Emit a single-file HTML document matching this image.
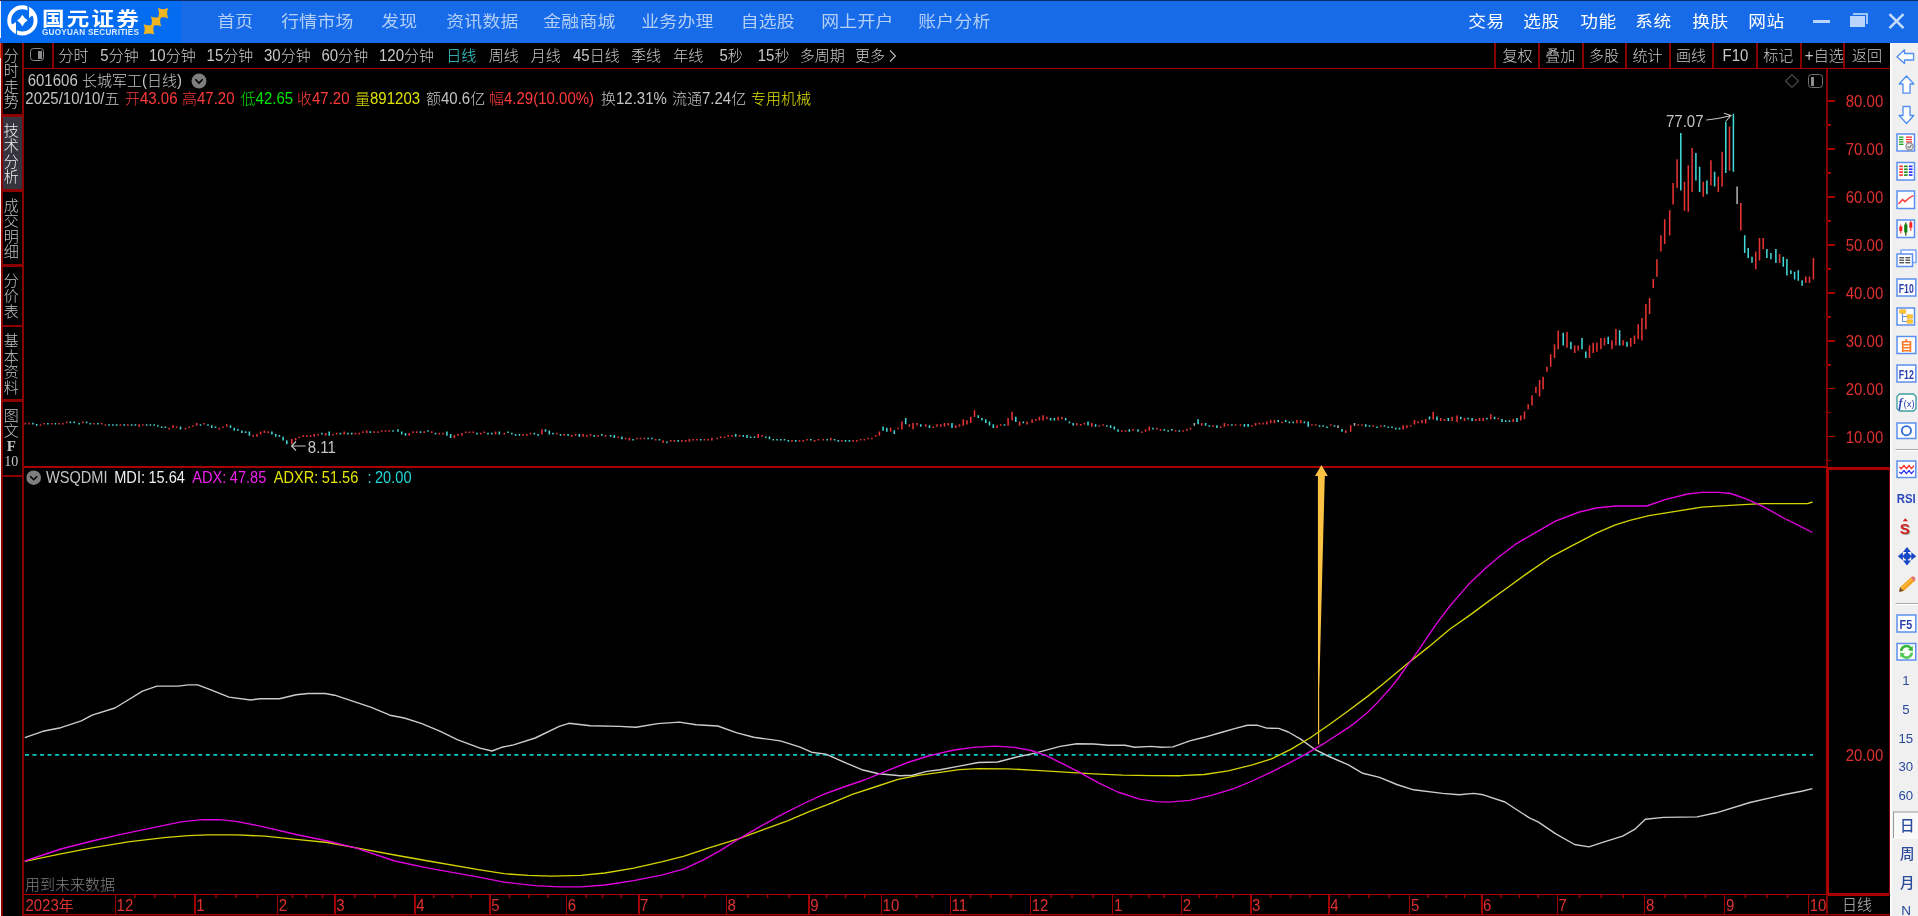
<!DOCTYPE html>
<html lang="zh-CN">
<head>
<meta charset="utf-8">
<title>国元证券 - 长城军工(日线)</title>
<style>
html,body{margin:0;padding:0;background:#000;}
body{width:1918px;height:916px;position:relative;overflow:hidden;font-family:"Liberation Sans","Noto Sans CJK SC",sans-serif;color:#c0c0c0;}
.abs{position:absolute;}
#wrap{position:absolute;left:0;top:0;width:1918px;height:916px;will-change:transform;transform:translateZ(0);filter:blur(0.35px);}
.t{position:absolute;white-space:nowrap;line-height:1;}
#title{left:0;top:0;width:1918px;height:43px;background:#176be8;}
#title .logo-bg{left:1px;top:0;width:180px;height:43px;background:#036cf0;}
#title .nav{font-size:17px;color:#b4cff6;top:12.8px;font-weight:400;letter-spacing:0.2px;transform:scale(1.05,0.93);transform-origin:50% 55%;}
#title .nav2{font-size:17px;color:#fff;top:12.6px;font-weight:400;letter-spacing:0.45px;transform:scale(1.04,0.93);transform-origin:50% 55%;}
.vl{position:absolute;width:2px;background:#880000;}
.hl{position:absolute;height:1.8px;background:#aa0000;}
.tb{font-size:15px;color:#c8c8c8;top:48px;font-weight:300;}
.d{display:inline-block;transform:scaleY(1.085);transform-origin:0 84.6%;}
.ax{font-size:15px;color:#e03030;font-weight:400;}
</style>
</head>
<body>
<div id="wrap">
<div id="title" class="abs">
  <div class="abs logo-bg"></div>
  <div class="abs" style="left:0;top:0;width:1918px;height:1px;background:#0a2a6a;"></div>
  <div class="abs" style="left:0;top:1px;width:1px;height:37px;background:#e8eef8;"></div>
  <svg class="abs" style="left:0;top:0" width="182" height="43" viewBox="0 0 182 43">
    <circle cx="22.4" cy="20.4" r="13.15" fill="none" stroke="#fff" stroke-width="3.9"/>
    <path d="M29.1 7.5 L29.1 18.35 L31.8 15.8 L34.5 17 L33 10 Z" fill="#fff"/>
    <path d="M16 22 L16 33.6 L12 30.5 L10.2 24.5 L13 24.1 Z" fill="#fff"/>
    <rect x="27.5" y="4.5" width="1.6" height="7" fill="#036cf0"/>
    <rect x="16" y="29" width="0.9" height="7" fill="#036cf0"/>
    <path d="M22.4 14.7 Q24.3 18.4 27.7 20.3 Q24.3 22.4 22.4 26.4 Q20.5 22.4 17.1 20.4 Q20.5 18.4 22.4 14.7Z" fill="#fff"/>
    <g fill="#eeb422">
      <path d="M143.5 24.3 Q149.0 26.57 154.5 24.3 Q152.08 29.450000000000003 154.5 34.6 Q149.0 32.33 143.5 34.6 Q145.92 29.450000000000003 143.5 24.3Z"/>
      <path d="M150.8 16.4 Q156.05 18.58 161.3 16.4 Q158.99 21.35 161.3 26.3 Q156.05 24.12 150.8 26.3 Q153.11 21.35 150.8 16.4Z"/>
      <path d="M157.8 8.1 Q163.05 10.37 168.3 8.1 Q165.99 13.25 168.3 18.4 Q163.05 16.13 157.8 18.4 Q160.11 13.25 157.8 8.1Z"/>
    </g>
  </svg>
  <div class="t" style="left:42px;top:6.5px;font-size:20.5px;font-weight:700;color:#fff;letter-spacing:2px;transform:scale(1.1,0.95);transform-origin:0 45%;font-family:'Noto Sans CJK SC',sans-serif;">国元证券</div>
  <div class="t" style="left:42px;top:28.5px;font-size:8.2px;font-weight:700;color:#d8e8ff;letter-spacing:0.22px;">GUOYUAN SECURITIES</div>

  <div class="t nav" style="left:218px;">首页</div>
  <div class="t nav" style="left:282.5px;">行情市场</div>
  <div class="t nav" style="left:382px;">发现</div>
  <div class="t nav" style="left:447.5px;">资讯数据</div>
  <div class="t nav" style="left:545px;">金融商城</div>
  <div class="t nav" style="left:643px;">业务办理</div>
  <div class="t nav" style="left:741.5px;">自选股</div>
  <div class="t nav" style="left:822.5px;">网上开户</div>
  <div class="t nav" style="left:920px;">账户分析</div>

  <div class="t nav2" style="left:1469px;">交易</div>
  <div class="t nav2" style="left:1524px;">选股</div>
  <div class="t nav2" style="left:1580.5px;">功能</div>
  <div class="t nav2" style="left:1636px;">系统</div>
  <div class="t nav2" style="left:1692.5px;">换肤</div>
  <div class="t nav2" style="left:1748.5px;">网站</div>

  <div class="abs" style="left:1813px;top:20px;width:17px;height:3px;background:#b9d4fb;"></div>
  <div class="abs" style="left:1853px;top:13px;width:15px;height:11px;background:#9fc4f8;"></div>
  <div class="abs" style="left:1850px;top:16px;width:15px;height:11px;background:#b9d5fb;box-shadow:0 0 0 1px #176be8;"></div>
  <svg class="abs" style="left:1886px;top:11px" width="21" height="21" viewBox="0 0 21 21"><path d="M3.5 3.2 L17.5 17.2 M17.5 3.2 L3.5 17.2" stroke="#c3dafb" stroke-width="2.6" fill="none"/></svg>
</div>
<div id="side" class="abs" style="left:0;top:43px;width:24px;height:873px;background:#000;">
<div class="abs" style="left:0;top:0;width:1px;height:15px;background:#e8451a;"></div>
<div class="abs" style="left:0;top:15px;width:1px;height:858px;background:#f4f0f0;"></div>
<div class="vl" style="left:1px;top:0;height:873px;"></div>
<div class="vl" style="left:22px;top:0;height:873px;"></div>
<div class="hl" style="left:1px;top:71.3px;width:22px;height:2.3px;background:#8c0000;"></div>
<div class="t" style="left:1.3px;width:20px;text-align:center;top:4.7px;font-size:15px;color:#c4c4c4;font-weight:300;">分</div>
<div class="t" style="left:1.3px;width:20px;text-align:center;top:20.2px;font-size:15px;color:#c4c4c4;font-weight:300;">时</div>
<div class="t" style="left:1.3px;width:20px;text-align:center;top:35.7px;font-size:15px;color:#c4c4c4;font-weight:300;">走</div>
<div class="t" style="left:1.3px;width:20px;text-align:center;top:51.2px;font-size:15px;color:#c4c4c4;font-weight:300;">势</div>
<div class="abs" style="left:3px;top:74.0px;width:19px;height:73.5px;background:#36353f;"></div>
<div class="hl" style="left:1px;top:146.3px;width:22px;height:2.3px;background:#8c0000;"></div>
<div class="t" style="left:1.3px;width:20px;text-align:center;top:79.7px;font-size:15px;color:#f0f0f0;font-weight:300;">技</div>
<div class="t" style="left:1.3px;width:20px;text-align:center;top:95.2px;font-size:15px;color:#f0f0f0;font-weight:300;">术</div>
<div class="t" style="left:1.3px;width:20px;text-align:center;top:110.7px;font-size:15px;color:#f0f0f0;font-weight:300;">分</div>
<div class="t" style="left:1.3px;width:20px;text-align:center;top:126.2px;font-size:15px;color:#f0f0f0;font-weight:300;">析</div>
<div class="hl" style="left:1px;top:221.3px;width:22px;height:2.3px;background:#8c0000;"></div>
<div class="t" style="left:1.3px;width:20px;text-align:center;top:154.7px;font-size:15px;color:#c4c4c4;font-weight:300;">成</div>
<div class="t" style="left:1.3px;width:20px;text-align:center;top:170.2px;font-size:15px;color:#c4c4c4;font-weight:300;">交</div>
<div class="t" style="left:1.3px;width:20px;text-align:center;top:185.7px;font-size:15px;color:#c4c4c4;font-weight:300;">明</div>
<div class="t" style="left:1.3px;width:20px;text-align:center;top:201.2px;font-size:15px;color:#c4c4c4;font-weight:300;">细</div>
<div class="hl" style="left:1px;top:281.8px;width:22px;height:2.3px;background:#8c0000;"></div>
<div class="t" style="left:1.3px;width:20px;text-align:center;top:229.7px;font-size:15px;color:#c4c4c4;font-weight:300;">分</div>
<div class="t" style="left:1.3px;width:20px;text-align:center;top:245.2px;font-size:15px;color:#c4c4c4;font-weight:300;">价</div>
<div class="t" style="left:1.3px;width:20px;text-align:center;top:260.7px;font-size:15px;color:#c4c4c4;font-weight:300;">表</div>
<div class="hl" style="left:1px;top:356.3px;width:22px;height:2.3px;background:#8c0000;"></div>
<div class="t" style="left:1.3px;width:20px;text-align:center;top:290.2px;font-size:15px;color:#c4c4c4;font-weight:300;">基</div>
<div class="t" style="left:1.3px;width:20px;text-align:center;top:305.7px;font-size:15px;color:#c4c4c4;font-weight:300;">本</div>
<div class="t" style="left:1.3px;width:20px;text-align:center;top:321.2px;font-size:15px;color:#c4c4c4;font-weight:300;">资</div>
<div class="t" style="left:1.3px;width:20px;text-align:center;top:336.7px;font-size:15px;color:#c4c4c4;font-weight:300;">料</div>
<div class="hl" style="left:1px;top:431.8px;width:22px;height:2.3px;background:#8c0000;"></div>
<div class="t" style="left:1.3px;width:20px;text-align:center;top:364.7px;font-size:15px;color:#c4c4c4;font-weight:300;">图</div>
<div class="t" style="left:1.3px;width:20px;text-align:center;top:380.2px;font-size:15px;color:#c4c4c4;font-weight:300;">文</div>
<div class="t" style="left:1.3px;width:20px;text-align:center;top:395.7px;font-size:15px;color:#c4c4c4;font-weight:300;font-family:'Liberation Serif',serif;font-weight:700;">F</div>
<div class="t" style="left:1.3px;width:20px;text-align:center;top:411.7px;font-size:14px;color:#c4c4c4;font-weight:300;font-family:'Liberation Serif',serif;">10</div>
</div>
<div class="abs" style="left:30px;top:48.3px;width:12px;height:10.6px;border:1.5px solid #8a8a8a;border-radius:3.5px;"></div>
<div class="abs" style="left:38.2px;top:50.8px;width:3.8px;height:8.4px;background:#8c8c8c;"></div>
<div class="vl" style="left:52px;top:43px;height:25px;"></div>
<div class="t tb" style="left:58.4px;">分时</div>
<div class="t tb" style="left:100.3px;"><span class="d">5</span>分钟</div>
<div class="t tb" style="left:149px;"><span class="d">10</span>分钟</div>
<div class="t tb" style="left:206.6px;"><span class="d">15</span>分钟</div>
<div class="t tb" style="left:264px;"><span class="d">30</span>分钟</div>
<div class="t tb" style="left:321.5px;"><span class="d">60</span>分钟</div>
<div class="t tb" style="left:379px;"><span class="d">120</span>分钟</div>
<div class="t tb" style="left:446.2px;color:#3cdada;">日线</div>
<div class="t tb" style="left:488.7px;">周线</div>
<div class="t tb" style="left:530.8px;">月线</div>
<div class="t tb" style="left:573px;"><span class="d">45</span>日线</div>
<div class="t tb" style="left:631px;">季线</div>
<div class="t tb" style="left:673.3px;">年线</div>
<div class="t tb" style="left:719.4px;"><span class="d">5</span>秒</div>
<div class="t tb" style="left:757.7px;"><span class="d">15</span>秒</div>
<div class="t tb" style="left:799.7px;">多周期</div>
<div class="t tb" style="left:854.9px;">更多</div>
<svg class="abs" style="left:888px;top:49px" width="10" height="14" viewBox="0 0 10 14"><path d="M2 1.5 L7.5 7 L2 12.5" stroke="#b8b8b8" stroke-width="1.1" fill="none"/></svg>
<div class="vl" style="left:1494.3px;top:43px;height:25px;"></div>
<div class="t tb" style="left:1495.7px;width:43.5px;text-align:center;">复权</div>
<div class="vl" style="left:1537.8px;top:43px;height:25px;"></div>
<div class="t tb" style="left:1538.2px;width:44px;text-align:center;">叠加</div>
<div class="vl" style="left:1581.8px;top:43px;height:25px;"></div>
<div class="t tb" style="left:1582.2px;width:43.5px;text-align:center;">多股</div>
<div class="vl" style="left:1625.3px;top:43px;height:25px;"></div>
<div class="t tb" style="left:1625.7px;width:43.5px;text-align:center;">统计</div>
<div class="vl" style="left:1668.8px;top:43px;height:25px;"></div>
<div class="t tb" style="left:1669.2px;width:43.5px;text-align:center;">画线</div>
<div class="vl" style="left:1712.3px;top:43px;height:25px;"></div>
<div class="t tb" style="left:1713.7px;width:43.5px;text-align:center;"><span class="d">F10</span></div>
<div class="vl" style="left:1755.8px;top:43px;height:25px;"></div>
<div class="t tb" style="left:1756.2px;width:44px;text-align:center;">标记</div>
<div class="vl" style="left:1799.8px;top:43px;height:25px;"></div>
<div class="t tb" style="left:1802.5px;width:43.5px;text-align:center;"><span class="d">+</span>自选</div>
<div class="vl" style="left:1843.3px;top:43px;height:25px;"></div>
<div class="t tb" style="left:1845.2px;width:43.5px;text-align:center;">返回</div>
<div class="hl" style="left:24px;top:67.6px;width:1866px;height:1.7px;"></div>
<div class="t" style="left:27.7px;top:73px;font-size:15px;color:#c4c4c4;font-weight:300;"><span class="d">601606</span> 长城军工<span class="d">(</span>日线<span class="d">)</span></div>
<svg class="abs" style="left:191px;top:72.5px" width="16" height="16" viewBox="0 0 16 16"><circle cx="8" cy="8" r="7.5" fill="#7e7e7e"/><path d="M4.3 6.3 L8 10 L11.7 6.3" stroke="#000" stroke-width="1.6" fill="none"/></svg>
<div class="t" style="left:25.3px;top:91px;font-size:15px;color:#c4c4c4;font-weight:300;"><span class="d">2025/10/10/</span>五</div>
<div class="t" style="left:125px;top:91px;font-size:15px;color:#ff3a3a;font-weight:300;">开<span class="d">43.06</span></div>
<div class="t" style="left:182px;top:91px;font-size:15px;color:#ff3a3a;font-weight:300;">高<span class="d">47.20</span></div>
<div class="t" style="left:240.6px;top:91px;font-size:15px;color:#00e600;font-weight:300;">低<span class="d">42.65</span></div>
<div class="t" style="left:297px;top:91px;font-size:15px;color:#ff3a3a;font-weight:300;">收<span class="d">47.20</span></div>
<div class="t" style="left:355px;top:91px;font-size:15px;color:#e0e000;font-weight:300;">量<span class="d">891203</span></div>
<div class="t" style="left:426px;top:91px;font-size:15px;color:#c4c4c4;font-weight:300;">额<span class="d">40.6</span>亿</div>
<div class="t" style="left:489px;top:91px;font-size:15px;color:#ff3a3a;font-weight:300;">幅<span class="d">4.29(10.00%)</span></div>
<div class="t" style="left:601px;top:91px;font-size:15px;color:#c4c4c4;font-weight:300;">换<span class="d">12.31%</span></div>
<div class="t" style="left:672px;top:91px;font-size:15px;color:#c4c4c4;font-weight:300;">流通<span class="d">7.24</span>亿</div>
<div class="t" style="left:751px;top:91px;font-size:15px;color:#e0e000;font-weight:300;">专用机械</div>
<svg class="abs" style="left:1784px;top:73px" width="16" height="16" viewBox="0 0 16 16"><path d="M8 1.6 L14.4 8 L8 14.4 L1.6 8 Z" stroke="#4a4a4a" stroke-width="1.2" fill="none"/></svg>
<div class="abs" style="left:1808px;top:74.2px;width:12.6px;height:11.6px;border:1.5px solid #707070;border-radius:3.5px;"></div>
<div class="abs" style="left:1810.8px;top:77px;width:3.6px;height:8.6px;background:#8c8c8c;"></div>
<div class="vl" style="left:1826.4px;top:69px;height:399px;"></div>
<div class="vl" style="left:1826.2px;top:467px;height:427px;width:2.7px;background:#b00000;"></div>
<div class="hl" style="left:24px;top:466.3px;width:1803px;height:1.4px;"></div>
<div class="hl" style="left:1827px;top:466.5px;width:62px;height:3px;"></div>
<div class="vl" style="left:1888.7px;top:467px;height:428px;"></div>
<div class="hl" style="left:1827px;top:893px;width:62px;height:2.6px;"></div>
<div class="hl" style="left:24px;top:893.8px;width:1803px;height:1.4px;"></div>
<div class="hl" style="left:24px;top:914.9px;width:1866px;height:1.1px;background:#5c0000;"></div>
<div class="hl" style="left:24px;top:913.9px;width:1866px;height:1.3px;background:#a40000;"></div>
<div class="vl" style="left:1826.4px;top:894px;height:21px;"></div>
<div class="abs" style="left:1828px;top:435.9px;width:6.5px;height:1.5px;background:#a60000;"></div>
<div class="t ax" style="left:1845.7px;top:429.8px;"><span class="d">10.00</span></div>
<div class="abs" style="left:1828px;top:387.9px;width:6.5px;height:1.5px;background:#a60000;"></div>
<div class="t ax" style="left:1845.7px;top:381.8px;"><span class="d">20.00</span></div>
<div class="abs" style="left:1828px;top:340.0px;width:6.5px;height:1.5px;background:#a60000;"></div>
<div class="t ax" style="left:1845.7px;top:333.9px;"><span class="d">30.00</span></div>
<div class="abs" style="left:1828px;top:292.1px;width:6.5px;height:1.5px;background:#a60000;"></div>
<div class="t ax" style="left:1845.7px;top:286.0px;"><span class="d">40.00</span></div>
<div class="abs" style="left:1828px;top:244.1px;width:6.5px;height:1.5px;background:#a60000;"></div>
<div class="t ax" style="left:1845.7px;top:238.0px;"><span class="d">50.00</span></div>
<div class="abs" style="left:1828px;top:196.2px;width:6.5px;height:1.5px;background:#a60000;"></div>
<div class="t ax" style="left:1845.7px;top:190.1px;"><span class="d">60.00</span></div>
<div class="abs" style="left:1828px;top:148.2px;width:6.5px;height:1.5px;background:#a60000;"></div>
<div class="t ax" style="left:1845.7px;top:142.1px;"><span class="d">70.00</span></div>
<div class="abs" style="left:1828px;top:100.3px;width:6.5px;height:1.5px;background:#a60000;"></div>
<div class="t ax" style="left:1845.7px;top:94.2px;"><span class="d">80.00</span></div>
<div class="abs" style="left:1828px;top:459.8px;width:2.8px;height:1.5px;background:#a60000;"></div>
<div class="abs" style="left:1828px;top:411.9px;width:2.8px;height:1.5px;background:#a60000;"></div>
<div class="abs" style="left:1828px;top:364.0px;width:2.8px;height:1.5px;background:#a60000;"></div>
<div class="abs" style="left:1828px;top:316.0px;width:2.8px;height:1.5px;background:#a60000;"></div>
<div class="abs" style="left:1828px;top:268.1px;width:2.8px;height:1.5px;background:#a60000;"></div>
<div class="abs" style="left:1828px;top:220.2px;width:2.8px;height:1.5px;background:#a60000;"></div>
<div class="abs" style="left:1828px;top:172.2px;width:2.8px;height:1.5px;background:#a60000;"></div>
<div class="abs" style="left:1828px;top:124.3px;width:2.8px;height:1.5px;background:#a60000;"></div>
<div class="t ax" style="left:1845.7px;top:748.4px;"><span class="d">20.00</span></div>
<svg class="abs" style="left:26px;top:470px" width="16" height="16" viewBox="0 0 16 16"><circle cx="7.7" cy="7.7" r="7.3" fill="#7e7e7e"/><path d="M4.2 6.2 L7.7 9.7 L11.2 6.2" stroke="#000" stroke-width="1.6" fill="none"/></svg>
<div class="t" style="left:45.9px;top:470.5px;font-size:14.6px;color:#c4c4c4;"><span class="d">WSQDMI</span></div>
<div class="t" style="left:114.2px;top:470.5px;font-size:14.6px;color:#f0f0f0;"><span class="d">MDI:</span></div>
<div class="t" style="left:148.4px;top:470.5px;font-size:14.6px;color:#f0f0f0;"><span class="d">15.64</span></div>
<div class="t" style="left:192.2px;top:470.5px;font-size:14.6px;color:#f020f0;"><span class="d">ADX:</span></div>
<div class="t" style="left:229.8px;top:470.5px;font-size:14.6px;color:#f020f0;"><span class="d">47.85</span></div>
<div class="t" style="left:273.7px;top:470.5px;font-size:14.6px;color:#e4e400;"><span class="d">ADXR:</span></div>
<div class="t" style="left:321.8px;top:470.5px;font-size:14.6px;color:#e4e400;"><span class="d">51.56</span></div>
<div class="t" style="left:367.6px;top:470.5px;font-size:14.6px;color:#20d8d8;"><span class="d">:</span></div>
<div class="t" style="left:375px;top:470.5px;font-size:14.6px;color:#20d8d8;"><span class="d">20.00</span></div>
<div class="t" style="left:25px;top:877px;font-size:15px;color:#808080;font-weight:300;">用到未来数据</div>
<div class="t ax" style="left:25.4px;top:897.5px;"><span class="d">2023</span>年</div>
<div class="abs" style="left:114.6px;top:895px;width:1.5px;height:19px;background:#a00000;"></div>
<div class="t ax" style="left:116.6px;top:897.5px;"><span class="d">12</span></div>
<div class="abs" style="left:194.3px;top:895px;width:1.5px;height:19px;background:#a00000;"></div>
<div class="t ax" style="left:196.3px;top:897.5px;"><span class="d">1</span></div>
<div class="abs" style="left:276.8px;top:895px;width:1.5px;height:19px;background:#a00000;"></div>
<div class="t ax" style="left:278.8px;top:897.5px;"><span class="d">2</span></div>
<div class="abs" style="left:334.3px;top:895px;width:1.5px;height:19px;background:#a00000;"></div>
<div class="t ax" style="left:336.3px;top:897.5px;"><span class="d">3</span></div>
<div class="abs" style="left:414.3px;top:895px;width:1.5px;height:19px;background:#a00000;"></div>
<div class="t ax" style="left:416.3px;top:897.5px;"><span class="d">4</span></div>
<div class="abs" style="left:489.3px;top:895px;width:1.5px;height:19px;background:#a00000;"></div>
<div class="t ax" style="left:491.3px;top:897.5px;"><span class="d">5</span></div>
<div class="abs" style="left:565.8px;top:895px;width:1.5px;height:19px;background:#a00000;"></div>
<div class="t ax" style="left:567.8px;top:897.5px;"><span class="d">6</span></div>
<div class="abs" style="left:638.1px;top:895px;width:1.5px;height:19px;background:#a00000;"></div>
<div class="t ax" style="left:640.1px;top:897.5px;"><span class="d">7</span></div>
<div class="abs" style="left:725.6px;top:895px;width:1.5px;height:19px;background:#a00000;"></div>
<div class="t ax" style="left:727.6px;top:897.5px;"><span class="d">8</span></div>
<div class="abs" style="left:808.3px;top:895px;width:1.5px;height:19px;background:#a00000;"></div>
<div class="t ax" style="left:810.3px;top:897.5px;"><span class="d">9</span></div>
<div class="abs" style="left:880.6px;top:895px;width:1.5px;height:19px;background:#a00000;"></div>
<div class="t ax" style="left:882.6px;top:897.5px;"><span class="d">10</span></div>
<div class="abs" style="left:949.6px;top:895px;width:1.5px;height:19px;background:#a00000;"></div>
<div class="t ax" style="left:951.6px;top:897.5px;"><span class="d">11</span></div>
<div class="abs" style="left:1029.7px;top:895px;width:1.5px;height:19px;background:#a00000;"></div>
<div class="t ax" style="left:1031.7px;top:897.5px;"><span class="d">12</span></div>
<div class="abs" style="left:1111.9px;top:895px;width:1.5px;height:19px;background:#a00000;"></div>
<div class="t ax" style="left:1113.9px;top:897.5px;"><span class="d">1</span></div>
<div class="abs" style="left:1180.8px;top:895px;width:1.5px;height:19px;background:#a00000;"></div>
<div class="t ax" style="left:1182.8px;top:897.5px;"><span class="d">2</span></div>
<div class="abs" style="left:1250.1px;top:895px;width:1.5px;height:19px;background:#a00000;"></div>
<div class="t ax" style="left:1252.1px;top:897.5px;"><span class="d">3</span></div>
<div class="abs" style="left:1328.3px;top:895px;width:1.5px;height:19px;background:#a00000;"></div>
<div class="t ax" style="left:1330.3px;top:897.5px;"><span class="d">4</span></div>
<div class="abs" style="left:1408.9px;top:895px;width:1.5px;height:19px;background:#a00000;"></div>
<div class="t ax" style="left:1410.9px;top:897.5px;"><span class="d">5</span></div>
<div class="abs" style="left:1481.1px;top:895px;width:1.5px;height:19px;background:#a00000;"></div>
<div class="t ax" style="left:1483.1px;top:897.5px;"><span class="d">6</span></div>
<div class="abs" style="left:1556.5px;top:895px;width:1.5px;height:19px;background:#a00000;"></div>
<div class="t ax" style="left:1558.5px;top:897.5px;"><span class="d">7</span></div>
<div class="abs" style="left:1643.9px;top:895px;width:1.5px;height:19px;background:#a00000;"></div>
<div class="t ax" style="left:1645.9px;top:897.5px;"><span class="d">8</span></div>
<div class="abs" style="left:1723.9px;top:895px;width:1.5px;height:19px;background:#a00000;"></div>
<div class="t ax" style="left:1725.9px;top:897.5px;"><span class="d">9</span></div>
<div class="abs" style="left:1807.7px;top:895px;width:1.5px;height:19px;background:#a00000;"></div>
<div class="t ax" style="left:1809.7px;top:897.5px;"><span class="d">10</span></div>
<svg class="abs" style="left:0;top:890px" width="1830" height="12" viewBox="0 890 1830 12"><path d="M135.0 895V898M155.0 895V898M175.0 895V898M216.0 895V898M236.0 895V898M257.5 895V898M292.5 895V898M306.0 895V898M322.5 895V898M355.0 895V898M375.0 895V898M395.0 895V898M433.7 895V898M452.5 895V898M471.0 895V898M509.5 895V898M528.8 895V898M548.0 895V898M586.3 895V898M602.6 895V898M621.3 895V898M661.3 895V898M683.0 895V898M705.0 895V898M747.8 895V898M767.6 895V898M789.0 895V898M826.6 895V898M845.6 895V898M864.6 895V898M916.5 895V898M932.5 895V898M970.5 895V898M990.8 895V898M1010.8 895V898M1051.3 895V898M1072.0 895V898M1093.0 895V898M1131.3 895V898M1148.8 895V898M1164.3 895V898M1199.3 895V898M1216.3 895V898M1233.0 895V898M1270.5 895V898M1290.5 895V898M1310.0 895V898M1349.3 895V898M1368.8 895V898M1389.3 895V898M1428.0 895V898M1446.3 895V898M1464.5 895V898M1500.8 895V898M1519.5 895V898M1538.3 895V898M1579.5 895V898M1601.3 895V898M1623.3 895V898M1665.0 895V898M1685.5 895V898M1705.5 895V898M1745.5 895V898M1767.0 895V898M1787.5 895V898" stroke="#a00000" stroke-width="1.4" fill="none"/></svg>
<div class="t" style="left:1842px;top:896.5px;font-size:15px;color:#c4c4c4;font-weight:300;">日线</div>
<svg class="abs" style="left:0;top:0" width="1918" height="916" viewBox="0 0 1918 916">
<path d="M25.4 422.7V424.4M29.1 422.7V424.4M40.5 424.2V425.8M44.2 422.9V424.5M51.7 422.9V424.5M59.2 422.9V424.5M62.9 422.9V424.5M66.7 421.6V423.2M82.9 421.6V423.2M94.1 422.9V424.5M101.6 422.9V424.5M105.4 424.2V425.8M120.4 424.2V425.8M127.9 424.2V425.8M139.2 424.2V426.8M142.9 424.2V425.8M169.2 427.8V429.4M173.0 425.2V428.1M176.7 426.5V428.1M185.5 427.8V429.4M189.2 426.5V428.1M193.0 425.2V426.8M196.7 422.9V425.8M204.2 422.9V424.5M219.2 427.8V429.4M223.0 426.5V428.1M226.8 424.2V426.8M253.1 435.1V436.7M256.9 434.1V436.7M260.6 431.5V434.4M264.4 430.5V433.1M268.2 431.3V432.9M291.8 439.0V444.0M295.6 438.0V440.6M299.3 436.5V438.1M303.1 435.3V436.9M306.8 435.3V436.9M310.6 435.3V436.9M314.3 434.1V436.7M318.1 434.0V435.6M325.6 432.9V435.7M332.9 434.0V435.6M336.7 432.8V434.4M344.2 431.5V434.4M355.4 432.8V434.4M359.2 432.8V434.4M362.9 431.3V432.9M366.7 430.2V433.1M374.2 431.3V432.9M378.0 431.3V432.9M381.7 430.2V431.8M385.5 430.2V431.8M389.2 430.2V431.8M409.2 432.9V435.7M413.0 431.3V432.9M416.7 431.3V432.9M424.3 431.3V432.9M431.8 431.3V432.9M439.3 432.8V434.4M443.1 432.8V434.4M454.4 435.1V438.0M458.1 434.1V435.7M461.9 432.9V435.7M465.7 431.5V433.1M469.4 431.5V433.1M473.2 431.5V433.1M480.7 432.8V434.4M484.4 431.5V433.1M495.6 431.5V434.4M504.3 432.8V434.4M523.1 434.1V435.7M526.9 434.1V435.7M530.6 432.8V434.4M541.9 429.2V434.4M556.8 432.8V434.4M564.3 434.1V435.7M571.8 435.1V436.7M575.6 434.1V435.7M583.1 434.1V436.7M586.8 435.1V436.7M590.6 434.1V435.7M598.1 435.1V436.7M605.6 435.1V436.7M618.1 436.4V438.0M625.6 437.7V439.3M629.4 437.8V440.6M636.9 437.7V439.3M640.5 437.7V439.3M644.4 437.7V439.3M655.6 439.0V440.6M663.1 440.2V443.0M670.7 440.1V441.7M674.4 440.1V441.7M681.9 440.1V441.7M685.7 440.1V441.7M689.4 439.0V441.7M693.2 439.0V440.6M696.9 439.0V440.6M704.4 439.0V440.6M708.2 439.0V440.6M711.9 437.8V440.6M717.0 437.7V439.3M720.7 436.4V438.0M724.5 436.4V438.0M728.2 435.1V436.7M732.0 435.1V436.7M739.5 435.1V436.7M758.2 434.1V438.0M762.0 435.1V436.7M792.0 440.1V441.7M799.5 440.1V441.7M803.3 440.1V441.7M807.0 439.0V440.6M814.6 440.1V441.7M818.3 439.0V440.6M823.3 439.0V440.6M830.8 437.8V440.6M841.9 440.1V441.7M853.1 440.1V441.7M856.9 440.1V441.7M860.6 439.0V440.6M864.4 439.0V440.6M868.2 437.7V439.3M871.9 437.7V439.3M875.7 435.1V436.7M879.4 431.5V435.7M890.6 427.8V431.8M898.1 427.7V429.3M901.9 421.6V429.4M909.4 424.2V426.8M913.0 422.9V429.2M917.0 422.9V425.6M925.7 424.2V426.8M933.2 426.5V428.1M937.0 424.2V426.8M940.7 424.2V426.8M944.5 422.9V426.8M948.2 422.9V425.6M955.7 425.2V428.1M959.5 424.2V426.8M963.3 419.2V425.8M967.0 420.3V424.4M970.8 416.7V422.9M974.5 410.3V416.9M997.0 425.2V428.1M1000.8 424.2V425.8M1008.1 417.9V425.8M1012.1 411.7V420.5M1019.6 421.6V425.8M1027.1 421.6V424.4M1032.1 419.2V422.9M1035.8 419.1V420.7M1039.4 416.7V420.5M1043.1 415.3V420.5M1046.9 416.7V419.2M1058.1 416.7V420.5M1061.9 416.7V419.2M1076.9 422.9V425.6M1080.7 424.1V425.7M1084.4 422.8V424.4M1091.8 422.9V426.8M1099.3 425.2V426.8M1103.1 424.2V425.8M1121.8 430.2V431.8M1125.5 430.2V431.8M1133.0 429.1V430.7M1141.8 431.4V433.0M1145.5 429.2V431.8M1149.3 426.6V430.7M1156.8 427.8V429.4M1160.5 429.1V430.7M1175.6 430.2V431.8M1183.1 430.2V431.8M1186.8 429.1V430.7M1190.6 427.8V429.4M1201.8 422.9V425.8M1213.1 425.2V426.8M1220.6 426.5V428.1M1224.4 422.9V426.8M1228.1 424.2V425.8M1235.6 424.2V425.8M1240.5 424.2V425.8M1252.0 425.2V426.8M1255.6 422.9V425.8M1259.4 422.8V424.4M1263.1 422.8V424.4M1266.9 421.6V424.4M1270.7 420.0V423.2M1274.4 420.0V423.2M1281.9 421.6V423.2M1296.9 420.0V423.2M1300.7 420.0V423.2M1311.9 424.2V425.8M1315.7 424.2V425.8M1330.7 424.2V425.8M1345.7 430.2V433.1M1350.7 425.2V431.8M1358.2 424.2V425.8M1362.0 424.2V425.8M1373.3 425.2V426.8M1380.8 425.2V426.8M1403.2 425.2V429.4M1406.9 425.2V428.1M1410.7 425.2V426.8M1414.5 420.0V424.4M1418.2 421.6V423.2M1422.0 420.0V423.2M1425.7 419.0V423.2M1433.2 411.7V419.5M1440.7 418.0V420.9M1444.5 419.1V420.9M1452.1 416.7V420.9M1457.0 415.4V421.9M1464.5 418.0V420.9M1475.8 419.1V420.9M1479.5 418.0V420.9M1483.2 418.0V420.9M1490.8 414.2V419.3M1498.3 417.8V419.4M1513.2 419.1V421.9M1520.8 415.4V420.6M1524.5 411.6V419.3M1528.2 404.3V409.3M1532.0 395.3V405.5M1535.9 386.8V392.9M1539.6 380.0V396.6M1543.1 376.8V389.2M1547.0 366.7V371.7M1550.7 354.2V366.7M1554.5 344.3V358.0M1558.2 330.5V349.3M1567.0 331.7V347.8M1574.7 345.5V352.9M1578.2 345.5V350.4M1589.5 345.5V357.9M1593.2 342.8V352.9M1596.9 342.8V351.8M1600.9 337.9V349.2M1604.5 337.9V345.5M1612.0 340.2V349.2M1615.9 329.1V345.5M1623.1 340.2V345.5M1630.7 337.9V346.8M1634.5 335.4V344.1M1638.2 324.2V339.3M1641.9 317.9V340.5M1645.9 304.1V329.3M1649.6 298.0V314.0M1653.3 279.1V287.9M1656.9 259.2V276.7M1660.9 235.3V251.6M1664.7 219.2V244.0M1669.7 210.2V235.5M1673.1 182.9V204.4M1677.1 159.2V188.0M1684.5 181.7V210.7M1688.3 165.3V211.7M1692.1 148.0V191.9M1703.3 181.8V196.7M1710.9 160.2V185.5M1718.3 176.8V191.9M1722.1 151.7V186.6M1729.5 126.4V170.7M1740.8 203.0V230.6M1755.8 251.6V269.3M1759.5 237.9V260.6M1763.2 237.9V249.3M1779.6 254.1V263.0M1805.8 276.6V282.9M1809.5 276.6V282.9M1813.4 258.0V279.4" stroke="#e63333" stroke-width="1.55" fill="none"/>
<path d="M32.9 422.7V424.4M36.7 424.1V425.8M47.9 422.9V424.5M55.4 422.9V424.5M70.4 421.6V423.2M74.2 421.6V423.2M79.1 422.9V424.5M86.6 421.6V423.2M90.4 422.9V424.5M97.9 422.9V424.5M109.1 424.2V425.8M112.9 424.2V425.8M116.6 424.2V425.8M124.2 424.2V425.8M131.7 424.2V425.8M135.4 424.2V425.8M146.7 424.2V425.8M150.4 424.2V425.8M154.2 424.2V425.8M157.9 425.2V426.8M161.7 426.5V428.1M165.4 426.5V428.1M180.5 426.6V429.4M200.5 424.2V425.8M208.0 424.2V425.8M211.7 425.2V428.1M215.5 426.5V428.1M230.5 425.2V428.1M234.3 427.8V430.7M238.0 429.1V430.7M241.9 430.5V433.1M245.6 431.3V432.9M249.4 431.5V435.7M271.9 431.5V434.4M275.7 434.1V436.7M279.4 435.1V436.7M283.1 436.7V440.6M286.8 440.2V444.2M321.9 432.8V434.4M329.2 431.5V435.7M340.4 432.8V434.4M347.9 432.8V434.4M351.7 432.8V434.4M370.4 431.3V432.9M393.0 430.2V431.8M398.0 429.2V431.8M401.7 431.5V434.4M405.5 432.9V435.7M420.5 431.3V432.9M428.0 430.2V431.8M435.5 432.8V434.4M446.9 431.5V435.7M450.6 434.1V438.0M476.9 432.8V434.4M488.0 432.8V434.4M491.8 432.8V434.4M499.3 431.5V434.4M508.1 431.5V433.1M511.8 432.8V434.4M515.6 434.1V435.7M519.4 434.1V435.7M534.4 432.8V434.4M538.1 434.1V435.7M545.5 429.2V431.8M549.3 430.5V434.4M553.0 432.8V434.4M560.5 434.1V435.7M568.1 434.1V435.7M579.3 434.1V436.7M594.3 435.1V436.7M601.8 434.1V435.7M610.6 435.1V436.7M614.3 435.1V438.0M621.9 436.5V439.3M633.1 439.0V440.6M648.1 437.7V439.3M651.9 437.7V439.3M659.4 439.0V440.6M666.9 441.5V443.1M678.2 440.1V441.7M700.7 439.0V440.6M735.7 434.1V436.7M743.2 435.1V436.7M747.0 435.1V438.0M750.7 436.4V438.0M754.5 436.4V438.0M765.8 436.4V438.0M769.5 436.5V439.3M773.3 439.0V440.6M777.0 439.0V440.6M780.8 439.0V440.6M784.5 439.0V440.6M788.3 440.1V441.7M795.8 440.1V441.7M810.8 439.0V440.6M827.1 439.0V440.6M834.6 439.0V440.6M838.3 440.1V441.7M845.6 440.1V441.7M849.4 440.1V441.7M883.1 426.6V430.7M886.8 427.8V431.8M894.3 430.2V434.1M905.7 417.9V424.2M920.7 424.2V426.8M929.5 425.2V428.1M952.0 422.9V428.1M978.3 415.3V417.9M982.0 417.9V420.5M985.8 419.2V422.9M989.5 421.6V425.6M993.3 424.2V428.1M1004.5 424.2V425.8M1015.8 416.7V421.9M1023.3 421.6V423.2M1050.6 417.9V420.5M1054.4 417.9V420.5M1065.7 417.9V420.5M1069.4 421.6V423.2M1073.2 422.9V425.6M1088.0 421.6V425.6M1095.6 424.2V426.8M1106.8 425.2V426.8M1110.6 425.2V428.1M1114.3 426.6V429.4M1118.0 429.2V431.8M1129.3 429.2V431.8M1138.0 429.2V431.8M1153.0 427.8V429.4M1164.3 429.1V430.7M1168.1 430.2V431.8M1171.8 429.1V430.7M1179.3 430.2V431.8M1198.1 419.2V424.2M1205.6 422.9V425.8M1209.3 425.2V426.8M1216.9 425.2V428.1M1231.9 424.2V425.8M1244.4 424.0V426.8M1248.1 424.0V426.8M1278.2 420.0V421.9M1285.7 420.0V421.9M1289.4 421.6V423.2M1293.2 421.6V423.2M1304.4 421.6V423.2M1308.2 421.6V426.8M1319.5 425.2V426.8M1323.2 425.2V426.8M1327.0 426.5V428.1M1334.5 425.2V426.8M1342.0 428.9V431.8M1365.8 424.2V426.8M1369.5 425.2V426.8M1377.0 426.5V428.1M1384.5 425.2V426.8M1388.3 426.5V428.1M1392.0 426.5V428.1M1395.8 427.8V429.4M1399.5 427.8V429.4M1429.5 416.4V419.5M1437.0 416.4V420.5M1448.3 418.0V420.9M1460.8 416.7V419.3M1468.2 417.8V419.4M1472.1 418.0V420.9M1487.0 417.8V419.4M1494.6 416.7V419.3M1502.0 419.1V421.9M1505.7 420.2V421.9M1509.4 420.2V421.9M1517.0 418.0V421.9M1563.2 332.8V345.5M1570.9 341.7V349.2M1582.0 337.9V349.2M1585.8 351.6V357.9M1608.2 336.7V344.1M1619.6 330.3V345.5M1627.0 341.7V346.8M1680.8 133.0V190.6M1695.9 152.9V180.5M1699.6 166.8V191.9M1706.9 180.5V194.2M1714.6 171.8V186.6M1725.8 121.6V172.9M1733.4 113.7V171.8M1744.7 235.3V253.0M1748.2 247.9V258.0M1752.0 256.7V262.8M1766.9 249.0V258.0M1770.9 253.0V259.3M1775.9 249.0V263.0M1783.3 256.7V266.7M1786.9 259.1V275.5M1790.9 270.2V274.1M1794.6 271.7V279.4M1798.3 270.2V280.7M1802.1 280.3V285.7" stroke="#42d6d6" stroke-width="1.55" fill="none"/>
<path d="M1194.3 422.9V425.8M1338.0 425.2V428.1M1354.5 422.9V425.8M1737.1 186.6V204.1" stroke="#b0b0b0" stroke-width="1.55" fill="none"/>
<text x="1666" y="126.8" transform="translate(0,126.8) scale(1,1.085) translate(0,-126.8)" font-size="15" fill="#c4c4c4" font-family="Liberation Sans, sans-serif">77.07</text>
<path d="M1706.3 120 Q1718 119 1730.5 115.8 M1724 113.2 L1731 115.5 L1726 121" stroke="#c4c4c4" stroke-width="1.1" fill="none"/>
<text x="307.8" y="453.3" transform="translate(0,453.3) scale(1,1.085) translate(0,-453.3)" font-size="15" fill="#c4c4c4" font-family="Liberation Sans, sans-serif">8.11</text>
<path d="M305.7 446 L291.5 446 M296 441.5 L291.5 446 L296 450.5" stroke="#c4c4c4" stroke-width="1.2" fill="none"/>
<path d="M25 754.8H1813" stroke="#08c6c6" stroke-width="1.8" stroke-dasharray="4 3.53" fill="none"/>
<path d="M1321.4 465 L1327.8 476 L1324.8 476 L1319.2 690 L1319.2 744.6 L1318 744.6 L1317.9 476 L1315 476 Z" fill="#fcc244"/>
<path d="M24.8 737.7 L42.8 731.3 L60.8 727.7 L81.3 720.9 L92.1 715.2 L114.9 708.0 L128.1 700.0 L142.5 691.1 L156.9 686.1 L178.5 686.1 L188.1 684.9 L197.8 684.9 L212.2 690.4 L229.0 697.1 L250.6 700.0 L260.2 698.8 L279.4 698.8 L296.2 694.7 L308.3 693.5 L325.1 693.5 L334.7 695.2 L356.3 702.4 L370.7 707.2 L389.9 715.2 L404.3 718.0 L421.2 723.3 L440.4 731.3 L457.2 739.7 L480.0 748.1 L492.0 751.0 L501.6 747.3 L513.6 744.9 L535.2 738.0 L559.3 726.4 L568.9 723.3 L590.5 725.7 L619.3 726.4 L636.1 727.2 L657.8 723.6 L679.4 722.1 L696.2 724.8 L717.8 726.0 L737.0 732.9 L753.8 737.3 L780.3 740.9 L799.5 746.9 L811.5 752.2 L825.9 754.1 L847.5 763.7 L861.9 769.7 L878.7 773.8 L900.4 775.7 L912.4 775.2 L926.8 771.4 L940.0 769.7 L959.2 766.1 L978.4 762.5 L997.6 762.0 L1016.9 757.0 L1036.1 752.9 L1060.1 746.4 L1076.9 743.7 L1093.7 744.0 L1108.1 745.2 L1125.0 745.2 L1134.6 747.3 L1151.4 746.4 L1161.0 747.3 L1173.0 746.9 L1189.8 740.9 L1204.2 737.3 L1221.0 732.5 L1235.5 728.4 L1247.5 725.2 L1257.1 725.2 L1266.7 728.1 L1278.7 728.4 L1288.3 732.0 L1300.3 738.9 L1314.7 749.3 L1329.1 756.5 L1348.4 764.9 L1362.8 773.3 L1379.6 777.4 L1396.8 784.5 L1413.6 789.8 L1442.5 793.4 L1459.3 794.8 L1473.7 793.4 L1483.3 794.8 L1504.9 802.0 L1528.9 817.6 L1538.5 822.2 L1555.4 833.7 L1574.6 844.5 L1589.0 846.9 L1603.4 842.1 L1622.6 836.1 L1634.6 829.4 L1645.4 819.3 L1663.4 817.4 L1697.1 816.9 L1716.3 812.8 L1749.9 802.5 L1783.6 794.8 L1802.8 791.0 L1812.4 788.6" stroke="#cccccc" stroke-width="1.4" fill="none" stroke-linejoin="round"/>
<path d="M24.8 861.4 L60.8 853.8 L92.1 847.8 L128.1 841.8 L164.1 837.7 L188.1 835.7 L207.4 834.8 L236.2 834.8 L265.0 836.2 L296.2 839.3 L327.5 842.5 L356.3 847.8 L394.7 855.0 L428.4 861.0 L480.0 869.9 L504.0 873.7 L528.0 875.4 L552.0 876.1 L580.9 875.4 L604.9 873.0 L633.7 868.2 L662.6 861.7 L684.2 856.2 L708.2 848.2 L738.2 838.9 L763.4 829.7 L787.5 820.9 L809.1 811.7 L830.7 803.3 L852.3 794.4 L876.4 786.5 L898.0 779.3 L919.6 775.2 L940.0 772.4 L959.2 769.7 L978.4 768.7 L1007.3 768.8 L1036.1 770.4 L1064.9 772.1 L1093.7 773.8 L1122.6 775.2 L1151.4 775.7 L1180.2 775.7 L1204.2 774.5 L1228.2 770.9 L1252.3 764.9 L1271.5 758.9 L1290.7 749.3 L1309.9 738.0 L1329.1 724.8 L1348.4 710.8 L1367.6 696.4 L1383.0 684.0 L1406.4 664.6 L1428.0 647.4 L1449.7 629.3 L1471.3 614.1 L1488.1 601.6 L1507.3 587.7 L1528.9 572.1 L1550.6 557.2 L1572.2 545.7 L1596.2 533.2 L1615.4 524.8 L1629.8 520.4 L1649.0 515.6 L1675.5 511.3 L1701.9 507.2 L1725.9 505.6 L1747.5 504.4 L1764.3 503.6 L1807.6 503.6 L1812.4 502.0" stroke="#d4d400" stroke-width="1.35" fill="none" stroke-linejoin="round"/>
<path d="M24.8 861.0 L60.8 849.0 L92.1 841.0 L123.3 833.8 L154.5 827.3 L180.9 821.8 L202.6 819.7 L219.4 819.7 L236.2 821.3 L262.6 826.6 L296.2 834.5 L327.5 841.0 L356.3 848.2 L394.7 861.0 L428.4 868.2 L480.0 877.4 L504.0 882.1 L535.2 885.7 L559.3 886.9 L580.9 886.9 L604.9 885.0 L633.7 880.7 L662.6 874.9 L684.2 868.9 L703.4 859.8 L720.2 850.6 L738.2 839.3 L758.6 827.3 L780.3 815.3 L801.9 804.5 L823.5 794.4 L845.1 786.5 L864.3 780.0 L883.6 772.1 L907.6 762.5 L926.8 756.5 L940.0 753.2 L954.4 750.0 L973.6 747.3 L995.2 746.1 L1014.5 747.3 L1031.3 750.5 L1045.7 755.3 L1062.5 763.7 L1079.3 772.1 L1098.5 782.9 L1117.8 792.0 L1139.4 799.2 L1156.2 801.6 L1168.2 802.1 L1189.8 800.4 L1211.4 795.4 L1233.0 788.9 L1252.3 781.0 L1276.3 769.7 L1300.3 757.2 L1324.3 743.3 L1348.4 727.6 L1355.7 722.2 L1367.5 712.4 L1378.0 701.9 L1389.8 688.8 L1397.7 679.0 L1405.5 667.8 L1413.4 657.4 L1420.0 648.2 L1426.2 638.8 L1435.7 624.8 L1449.5 606.5 L1461.9 592.1 L1468.9 584.1 L1485.7 568.0 L1500.1 556.0 L1516.9 543.3 L1533.7 533.7 L1555.4 521.2 L1579.4 512.0 L1596.2 508.0 L1615.4 506.0 L1646.6 506.0 L1665.9 499.3 L1687.5 494.0 L1701.9 492.3 L1718.7 492.3 L1730.7 493.5 L1747.5 499.3 L1764.3 507.2 L1783.6 518.0 L1798.0 525.2 L1812.4 532.5" stroke="#e000e0" stroke-width="1.35" fill="none" stroke-linejoin="round"/>
</svg>
<div id="rt" class="abs" style="left:1890px;top:43px;width:28px;height:873px;background:#f0f0f0;">
<div class="abs" style="left:0;top:0;width:2px;height:873px;background:#fbfbfb;"></div>
</div>
<svg class="abs" style="left:1890px;top:43px" width="28" height="873" viewBox="1890 43 28 873" font-family="Liberation Sans, Noto Sans CJK SC, sans-serif">
<path d="M1897 56.7 L1904.5 49.8 L1904.5 53.5 L1913.6 53.5 L1913.6 60 L1904.5 60 L1904.5 63.6 Z" fill="#fff" stroke="#4f8df2" stroke-width="1.3" stroke-linejoin="round"/>
<path d="M1906.5 76 L1913.8 84 L1910 84 L1910 93.2 L1903 93.2 L1903 84 L1899.2 84 Z" fill="#fff" stroke="#4f8df2" stroke-width="1.3" stroke-linejoin="round"/>
<path d="M1906.5 123.5 L1913.8 115.5 L1910 115.5 L1910 106.5 L1903 106.5 L1903 115.5 L1899.2 115.5 Z" fill="#fff" stroke="#4f8df2" stroke-width="1.3" stroke-linejoin="round"/>
<rect x="1897" y="134" width="17.5" height="17" fill="#fff" stroke="#5b8ff0" stroke-width="1.5"/>
<rect x="1899" y="136.5" width="4.5" height="1.3" fill="#20a020"/>
<rect x="1906" y="136.5" width="6" height="1.3" fill="#ff3030"/>
<rect x="1899" y="138.9" width="4.5" height="1.3" fill="#20a020"/>
<rect x="1906" y="138.9" width="6" height="1.3" fill="#ff3030"/>
<rect x="1899" y="141.3" width="4.5" height="1.3" fill="#20a020"/>
<rect x="1906" y="141.3" width="6" height="1.3" fill="#ff3030"/>
<rect x="1899" y="143.7" width="4.5" height="1.3" fill="#20a020"/>
<circle cx="1909.5" cy="146.5" r="3.6" fill="#e8e8e8" stroke="#888" stroke-width="1.2"/><path d="M1907.6 146.5 L1909.2 148 L1911.6 144.8" stroke="#777" stroke-width="1.1" fill="none"/>
<rect x="1897" y="162.5" width="17.5" height="17.5" fill="#fff" stroke="#5b8ff0" stroke-width="1.5"/>
<rect x="1899.3" y="165.5" width="3.6" height="1.7" fill="#ff3030"/>
<rect x="1899.3" y="168.4" width="3.6" height="1.7" fill="#ff3030"/>
<rect x="1899.3" y="171.3" width="3.6" height="1.7" fill="#ff3030"/>
<rect x="1899.3" y="174.2" width="3.6" height="1.7" fill="#ff3030"/>
<rect x="1904.1" y="165.5" width="3.6" height="1.7" fill="#209020"/>
<rect x="1904.1" y="168.4" width="3.6" height="1.7" fill="#209020"/>
<rect x="1904.1" y="171.3" width="3.6" height="1.7" fill="#209020"/>
<rect x="1904.1" y="174.2" width="3.6" height="1.7" fill="#209020"/>
<rect x="1908.8999999999999" y="165.5" width="3.6" height="1.7" fill="#3030ff"/>
<rect x="1908.8999999999999" y="168.4" width="3.6" height="1.7" fill="#3030ff"/>
<rect x="1908.8999999999999" y="171.3" width="3.6" height="1.7" fill="#3030ff"/>
<rect x="1908.8999999999999" y="174.2" width="3.6" height="1.7" fill="#3030ff"/>
<rect x="1897" y="191" width="17.5" height="17.5" fill="#fff" stroke="#5b8ff0" stroke-width="1.5"/>
<path d="M1898.5 204 L1902.5 199.5 L1905 201.8 L1909 198 L1913.5 195.5" stroke="#ff3030" stroke-width="1.4" fill="none"/>
<rect x="1897" y="220" width="17.5" height="17.5" fill="#fff" stroke="#5b8ff0" stroke-width="1.5"/>
<path d="M1900.8 224.5V233.5M1905.8 222.5V235.5M1910.8 220.8V231" stroke-width="1" fill="none" stroke="#ff2020"/>
<rect x="1899.3" y="226.5" width="3" height="4.6" fill="#ff2020"/><rect x="1904.2" y="224.5" width="3.2" height="8" fill="#108010"/><path d="M1905.8 222.5V235.5" stroke="#108010" stroke-width="1"/><rect x="1909.3" y="222.5" width="3" height="5.2" fill="#ff2020"/>
<rect x="1901" y="250" width="15" height="12.5" fill="#fff" stroke="#7aa6f4" stroke-width="1.5"/>
<rect x="1897" y="254" width="15.5" height="12.5" fill="#fff" stroke="#5b8ff0" stroke-width="1.5"/>
<rect x="1899.3" y="257.0" width="4.8" height="1.4" fill="#555"/><rect x="1905.4" y="257.0" width="4.8" height="1.4" fill="#555"/>
<rect x="1899.3" y="259.5" width="4.8" height="1.4" fill="#555"/><rect x="1905.4" y="259.5" width="4.8" height="1.4" fill="#555"/>
<rect x="1899.3" y="262.0" width="4.8" height="1.4" fill="#555"/><rect x="1905.4" y="262.0" width="4.8" height="1.4" fill="#555"/>
<rect x="1897" y="279" width="18.799999999999955" height="17" fill="#fff" stroke="#5b8ff0" stroke-width="1.5"/>
<text x="1898.8" y="292.6" font-size="12.5" fill="#2a3eb0" font-weight="700" textLength="15" lengthAdjust="spacingAndGlyphs">F10</text>
<rect x="1897" y="308" width="17.5" height="17" fill="#fff" stroke="#5b8ff0" stroke-width="1.5"/>
<path d="M1902.5 312V321.5H1907M1902.5 316.5H1907" stroke="#6a90e0" stroke-width="1.1" fill="none"/>
<rect x="1899.8" y="309.8" width="6" height="3.4" fill="#ffc830" stroke="#e0a020" stroke-width=".5"/><rect x="1907" y="314.8" width="5.6" height="3.4" fill="#ffc830" stroke="#e0a020" stroke-width=".5"/><rect x="1907" y="319.8" width="5.6" height="3.4" fill="#ffc830" stroke="#e0a020" stroke-width=".5"/>
<rect x="1897" y="336.5" width="18.799999999999955" height="17.0" fill="#fff" stroke="#5b8ff0" stroke-width="1.5"/>
<text x="1900" y="350.3" font-size="13" fill="#ff7a2a" font-weight="700">自</text>
<rect x="1897" y="365" width="18.799999999999955" height="17" fill="#fff" stroke="#5b8ff0" stroke-width="1.5"/>
<text x="1898.8" y="378.8" font-size="12.5" fill="#2a3eb0" font-weight="700" textLength="15" lengthAdjust="spacingAndGlyphs">F12</text>
<path d="M1899.5 394 H1913.5 L1916 396.5 V408.5 L1913.5 411 H1899.5 L1897 408.5 V396.5 Z" fill="#fff" stroke="#3f9f9f" stroke-width="1.4"/>
<text x="1898.6" y="407" font-size="12" fill="#2a3eb0" font-style="italic" font-family="Liberation Serif, serif" font-weight="700">f</text><text x="1903.5" y="406.5" font-size="9.5" fill="#2a3eb0">(x)</text>
<rect x="1897" y="423" width="18.799999999999955" height="15.5" fill="#fff" stroke="#5b8ff0" stroke-width="1.5"/>
<circle cx="1906.4" cy="430.7" r="4.6" fill="none" stroke="#2a6ad8" stroke-width="1.8"/>
<rect x="1895.5" y="449" width="23" height="1" fill="#a8a8a8"/><rect x="1895.5" y="450" width="23" height="1" fill="#fff"/>
<rect x="1897" y="461" width="18.799999999999955" height="16.5" fill="#fff" stroke="#5b8ff0" stroke-width="1.5"/>
<path d="M1899.3 467 L1901.3 468.6 L1904 465.6 L1906.4 468.6 L1909 465.6 L1911.4 468.6 L1914 465.6" stroke="#ff2020" stroke-width="1.3" fill="none"/>
<path d="M1899.3 472 L1901.3 473.6 L1904 470.6 L1906.4 473.6 L1909 470.6 L1911.4 473.6 L1914 470.6" stroke="#3030ff" stroke-width="1.3" fill="none"/>
<text x="1896.8" y="503" font-size="13.5" fill="#2a48c0" font-weight="700" textLength="19" lengthAdjust="spacingAndGlyphs">RSI</text>
<path d="M1905.3 518.3 L1908 521.3 L1902.6 521.3Z" fill="#d82020"/>
<text x="1900.7" y="534.6" font-size="15" fill="#999" font-weight="700">S</text><text x="1899.8" y="533.8" font-size="15" fill="#d62020" font-weight="700">S</text>
<g fill="#1848c8"><path d="M1907 547 L1911 552 L1903 552Z"/><path d="M1907 565.6 L1911 560.6 L1903 560.6Z"/><path d="M1897.8 556.3 L1902.8 552.3 L1902.8 560.3Z"/><path d="M1916.3 556.3 L1911.3 552.3 L1911.3 560.3Z"/><circle cx="1907" cy="556.3" r="3.3"/><rect x="1906" y="551" width="2" height="10.5"/><rect x="1901.8" y="555.3" width="10.5" height="2"/></g>
<path d="M1899 591.8 L1900.2 587.3 L1910.6 577.8 L1914.2 581.5 L1903.6 591 Z" fill="#f6a21a"/><path d="M1910.6 577.8 L1912.2 576.6 Q1914 576 1915 577.6 L1915.4 580 L1914.2 581.5Z" fill="#e87070"/><path d="M1899 591.8 L1900.2 587.3 L1903.6 591Z" fill="#6a5030"/><path d="M1901.5 588.8 L1911.8 579.2" stroke="#ffd060" stroke-width="1"/>
<rect x="1895.5" y="603" width="23" height="1" fill="#a8a8a8"/><rect x="1895.5" y="604" width="23" height="1" fill="#fff"/>
<rect x="1897" y="615" width="18.799999999999955" height="17" fill="#fff" stroke="#5b8ff0" stroke-width="1.5"/>
<text x="1899.6" y="629" font-size="13" fill="#2a3eb0" font-weight="700" textLength="12.5" lengthAdjust="spacingAndGlyphs">F5</text>
<rect x="1897" y="643.5" width="18.799999999999955" height="16.5" fill="#fff" stroke="#5b8ff0" stroke-width="1.5"/>
<path d="M1901.2 651 A5.4 5.4 0 0 1 1911 648.3" stroke="#38b838" stroke-width="2.6" fill="none"/><path d="M1912.8 646 L1912.8 651.2 L1907.8 650Z" fill="#38b838"/><path d="M1911.8 652.6 A5.4 5.4 0 0 1 1902 655.3" stroke="#58c858" stroke-width="2.6" fill="none"/><path d="M1900.2 657.6 L1900.2 652.4 L1905.2 653.6Z" fill="#58c858"/>
<text x="1905.8" y="685.0999999999999" font-size="13.2" fill="#2a4a9c" text-anchor="middle">1</text>
<text x="1905.8" y="713.8" font-size="13.2" fill="#2a4a9c" text-anchor="middle">5</text>
<text x="1905.8" y="742.5999999999999" font-size="13.2" fill="#2a4a9c" text-anchor="middle">15</text>
<text x="1905.8" y="771.4" font-size="13.2" fill="#2a4a9c" text-anchor="middle">30</text>
<text x="1905.8" y="799.8" font-size="13.2" fill="#2a4a9c" text-anchor="middle">60</text>
<rect x="1893" y="811.5" width="25" height="26.5" fill="#f9f9f9"/><rect x="1893" y="811.5" width="25" height="1" fill="#9a9a9a"/><rect x="1893" y="811.5" width="1" height="26.5" fill="#9a9a9a"/><rect x="1894" y="837.5" width="24" height="1" fill="#fff"/>
<text x="1907.2" y="831.2" font-size="14.5" fill="#2a4a9c" text-anchor="middle" font-weight="500">日</text>
<text x="1907.2" y="858.9000000000001" font-size="14.5" fill="#2a4a9c" text-anchor="middle" font-weight="500">周</text>
<text x="1907.2" y="887.7" font-size="14.5" fill="#2a4a9c" text-anchor="middle" font-weight="500">月</text>
<text x="1906.2" y="915" font-size="13.5" fill="#2a4a9c" text-anchor="middle">N</text>
</svg>
</div>
</body>
</html>
